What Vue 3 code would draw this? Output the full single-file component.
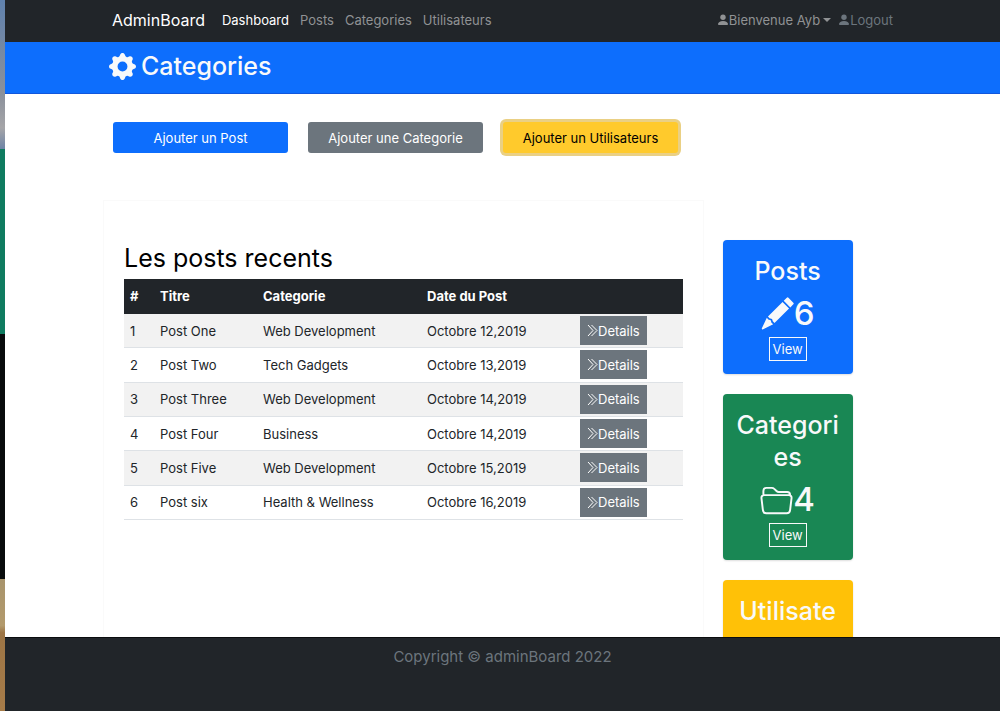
<script setup>
const links = [
  { label: 'Dashboard', active: true },
  { label: 'Posts' },
  { label: 'Categories' },
  { label: 'Utilisateurs' },
]
const actions = [
  { label: 'Ajouter un Post', kind: 'primary' },
  { label: 'Ajouter une Categorie', kind: 'secondary' },
  { label: 'Ajouter un Utilisateurs', kind: 'warning' },
]
const posts = [
  { id: 1, title: 'Post One', category: 'Web Development', date: 'Octobre 12,2019' },
  { id: 2, title: 'Post Two', category: 'Tech Gadgets', date: 'Octobre 13,2019' },
  { id: 3, title: 'Post Three', category: 'Web Development', date: 'Octobre 14,2019' },
  { id: 4, title: 'Post Four', category: 'Business', date: 'Octobre 14,2019' },
  { id: 5, title: 'Post Five', category: 'Web Development', date: 'Octobre 15,2019' },
  { id: 6, title: 'Post six', category: 'Health & Wellness', date: 'Octobre 16,2019' },
]
</script>

<template>
  <div class="desktop">
    <div class="window">
      <nav class="navbar">
        <div class="container nav-inner">
          <a class="brand" href="#">AdminBoard</a>
          <a v-for="l in links" :key="l.label" href="#" class="nav-link" :class="{ active: l.active }">{{ l.label }}</a>
          <div class="nav-user">
            <a class="nav-link" href="#">
              <svg class="person" viewBox="0 0 12 12"><circle cx="6" cy="3.3" r="2.7" /><path d="M1.800 11C1 11 1 10.500 1 10.100 1 8.400 3 7 6 7s5 1.400 5 3.100c0 .4 0 .9-.8.9z" /></svg>Bienvenue Ayb<span class="caret"></span>
            </a>
            <a class="nav-link logout" href="#">
              <svg class="person" viewBox="0 0 12 12"><circle cx="6" cy="3.3" r="2.7" /><path d="M1.800 11C1 11 1 10.500 1 10.100 1 8.400 3 7 6 7s5 1.400 5 3.100c0 .4 0 .9-.8.9z" /></svg>Logout
            </a>
          </div>
        </div>
      </nav>

      <header class="banner">
        <div class="container">
          <h1>
            <svg class="gear" viewBox="0 0 16 16"><path d="M9.405 1.050c-.413-1.400-2.397-1.400-2.810 0l-.1.340a1.464 1.464 0 0 1-2.105.872l-.310-.170c-1.283-.698-2.686.705-1.987 1.987l.169.311c.446.820.023 1.841-.872 2.105l-.340.100c-1.400.413-1.400 2.397 0 2.810l.340.100a1.464 1.464 0 0 1 .872 2.105l-.170.310c-.698 1.283.705 2.686 1.987 1.987l.311-.169a1.464 1.464 0 0 1 2.105.872l.1.340c.413 1.400 2.397 1.400 2.810 0l.1-.340a1.464 1.464 0 0 1 2.105-.872l.310.170c1.283.698 2.686-.705 1.987-1.987l-.169-.311a1.464 1.464 0 0 1 .872-2.105l.340-.1c1.400-.413 1.400-2.397 0-2.810l-.340-.1a1.464 1.464 0 0 1-.872-2.105l.170-.310c.698-1.283-.705-2.686-1.987-1.987l-.311.169a1.464 1.464 0 0 1-2.105-.872zM8 10.930a2.929 2.929 0 1 1 0-5.860 2.929 2.929 0 0 1 0 5.858z" /></svg>
            Categories
          </h1>
        </div>
      </header>

      <main class="content">
        <div class="inner">
          <section class="actions">
            <button v-for="a in actions" :key="a.label" type="button" class="btn" :class="a.kind">{{ a.label }}</button>
          </section>

          <div class="columns">
            <section class="panel">
              <h2>Les posts recents</h2>
              <table>
                <colgroup>
                  <col class="c-id" /><col class="c-title" /><col class="c-cat" /><col class="c-date" /><col />
                </colgroup>
                <thead>
                  <tr><th>#</th><th>Titre</th><th>Categorie</th><th>Date du Post</th><th></th></tr>
                </thead>
                <tbody>
                  <tr v-for="p in posts" :key="p.id">
                    <td>{{ p.id }}</td>
                    <td>{{ p.title }}</td>
                    <td>{{ p.category }}</td>
                    <td>{{ p.date }}</td>
                    <td>
                      <a class="details" href="#"><svg viewBox="0 0 11 13"><path d="M1 1l5 5.500-5 5.500M4.500 1l5.500 5.500-5.500 5.500" /></svg>Details</a>
                    </td>
                  </tr>
                </tbody>
              </table>
            </section>

            <aside class="stats">
              <article class="stat blue">
                <h3>Posts</h3>
                <p class="count">
                  <svg viewBox="0 0 34 34"><path d="M26.600.800a1.200 1.200 0 0 1 1.700 0l5 5a1.200 1.200 0 0 1 0 1.700l-3.100 3.200-6.800-6.800zM22.200 5.200l6.700 6.700-15 14.800-1.700-1.600-.800-2.500-2.600-.8-1.600-1.800zM6 21.500l1.500 1.700 2.500.8.800 2.600 1.800 1.500-10.400 5.200c-1 .5-1.700-.1-1.300-1.100z" /></svg>6
                </p>
                <a class="view" href="#">View</a>
              </article>
              <article class="stat green">
                <h3>Categories</h3>
                <p class="count">
                  <svg class="line" viewBox="0 0 34 34"><path d="M3.500 12.500V8.300C3.500 6.500 4.700 5 6.500 5h5.700c1 0 1.800.4 2.500 1.100l2.300 2.200c.7.7 1.400 1 2.400 1h8.600c1.900 0 3 1.200 3 3.200M4.300 12.500h25.400c1.800 0 3 1.300 2.800 3L31 28c-.2 2-1.600 3.200-3.500 3.200h-21C4.600 31.200 3.200 30 3 28L1.500 15.500c-.2-1.700 1-3 2.800-3z" /></svg>4
                </p>
                <a class="view" href="#">View</a>
              </article>
              <article class="stat yellow">
                <h3>Utilisateurs</h3>
              </article>
            </aside>
          </div>
        </div>
      </main>

      <footer class="footer">Copyright © adminBoard 2022</footer>
    </div>
  </div>
</template>

<style>
body {
  margin: 0;
}
</style>

<style scoped>
* {
  box-sizing: border-box;
}
.desktop {
  height: 100vh;
  padding-left: 5px;
  font-family: Inter, "Liberation Sans", sans-serif;
  font-size: 13px;
  line-height: 20px;
  color: #212529;
  background: linear-gradient(#5f81ad 0, #8a909b 13%, #a5a5a8 18%, #6d83a6 21%, #0f7b60 21%, #0f7b60 47%, #080b0c 47%, #080b0c 81.500%, #a8946c 81.500%, #b39a6c 88%, #9d7545 89%, #a67c49 100%);
}
.window {
  display: flex;
  flex-direction: column;
  height: 100%;
  background: #fff;
}
a {
  color: inherit;
  text-decoration: none;
}
svg {
  fill: currentColor;
}
.container {
  width: 100%;
  max-width: 807px;
  margin: 0 auto;
  padding: 0 10px;
}
.navbar {
  flex: none;
  background: #212529;
}
.nav-inner {
  display: flex;
  align-items: center;
  gap: 11px;
  height: 42px;
  padding: 0 13px 2px;
}
.brand {
  margin-right: 6px;
  font-size: 16px;
  color: #fff;
}
.nav-link {
  display: flex;
  align-items: center;
  color: #909294;
}
.nav-link.active {
  color: #fff;
}
.nav-user {
  display: flex;
  gap: 7px;
  margin-left: auto;
}
.nav-link.logout {
  color: #6c757d;
}
.person {
  width: 12px;
  height: 12px;
}
.caret {
  margin-left: 3px;
  border: 4px solid transparent;
  border-top-color: currentColor;
  border-bottom: 0;
}
.banner {
  flex: none;
  height: 52px;
  background: #0d6efd;
  border-bottom: 1px solid #1157dc;
  color: #f8f9fa;
}
.banner h1 {
  display: flex;
  align-items: center;
  gap: 5px;
  margin: 0;
  font-size: 25px;
  font-weight: 500;
  line-height: 48px;
}
.gear {
  width: 27px;
  height: 27px;
}
.content {
  flex: 1;
  min-height: 0;
  overflow: hidden;
}
.inner {
  width: 100%;
  max-width: 799px;
  margin: 0 auto;
  padding: 28px 19px 0 0;
}
.actions {
  display: grid;
  grid-template-columns: repeat(4, 1fr);
  gap: 20px;
  padding: 0 10px;
}
.btn {
  height: 31px;
  padding: 0;
  border: 0;
  border-radius: 3px;
  font: inherit;
  color: #fff;
}
.btn.primary {
  background: #0d6efd;
}
.btn.secondary {
  background: #6c757d;
}
.btn.warning {
  background: #ffca2c;
  color: #000;
  box-shadow: 0 0 0 3px #ead084;
}
.columns {
  display: flex;
  align-items: flex-start;
  gap: 19px;
  padding-top: 47px;
}
.panel {
  flex: 0 0 77%;
  min-height: 520px;
  padding: 41px 20px;
  border: 1px solid #fafafa;
}
.panel h2 {
  margin: 0 0 5px;
  font-size: 25px;
  font-weight: 400;
  line-height: 32px;
  color: #000;
}
table {
  width: 100%;
  height: 241px;
  border-collapse: collapse;
  table-layout: fixed;
}
.c-id {
  width: 30px;
}
.c-title {
  width: 103px;
}
.c-cat {
  width: 164px;
}
.c-date {
  width: 153px;
}
th,
td {
  padding: 0 6px;
  text-align: left;
  white-space: nowrap;
}
thead tr {
  height: 35px;
  background: #212529;
  color: #fff;
}
th {
  padding-bottom: 2px;
  font-weight: 700;
}
td {
  border-bottom: 1px solid #dee2e6;
}
tbody tr:nth-child(odd) {
  background: #f2f2f2;
}
.details {
  display: inline-flex;
  align-items: center;
  height: 29px;
  padding: 0 7px;
  background: #6c757d;
  color: #fff;
  vertical-align: middle;
}
.details svg {
  width: 11px;
  height: 13px;
  fill: none;
  stroke: currentColor;
}
.stats {
  flex: 0 0 130px;
  padding-top: 40px;
}
.stat {
  margin-bottom: 20px;
  padding: 15px 12px 13px;
  border-radius: 4px;
  text-align: center;
  color: #f8f9fa;
  box-shadow: 0 1px 2px #0002;
}
.stat.blue {
  background: #0d6efd;
}
.stat.green {
  background: #198754;
}
.stat.yellow {
  background: #ffc107;
}
.stat h3 {
  margin: 0 0 6px;
  font-size: 25px;
  font-weight: 500;
  line-height: 32px;
  overflow-wrap: anywhere;
}
.count {
  display: flex;
  align-items: center;
  justify-content: center;
  margin: 0 0 4px;
  font-size: 33px;
  font-weight: 500;
  line-height: 40px;
}
.count svg {
  width: 33px;
  height: 33px;
}
.count svg.line {
  fill: none;
  stroke: currentColor;
  stroke-width: 2;
}
.view {
  display: inline-block;
  padding: 0 3px;
  border: 1px solid #f8f9fa;
  line-height: 22px;
  vertical-align: top;
}
.footer {
  flex: none;
  height: 74px;
  padding-top: 8px;
  background: #212529;
  border-top: 1px solid #0b0d0f;
  color: #6c757d;
  font-size: 15px;
  line-height: 22px;
  text-align: center;
}
</style>
